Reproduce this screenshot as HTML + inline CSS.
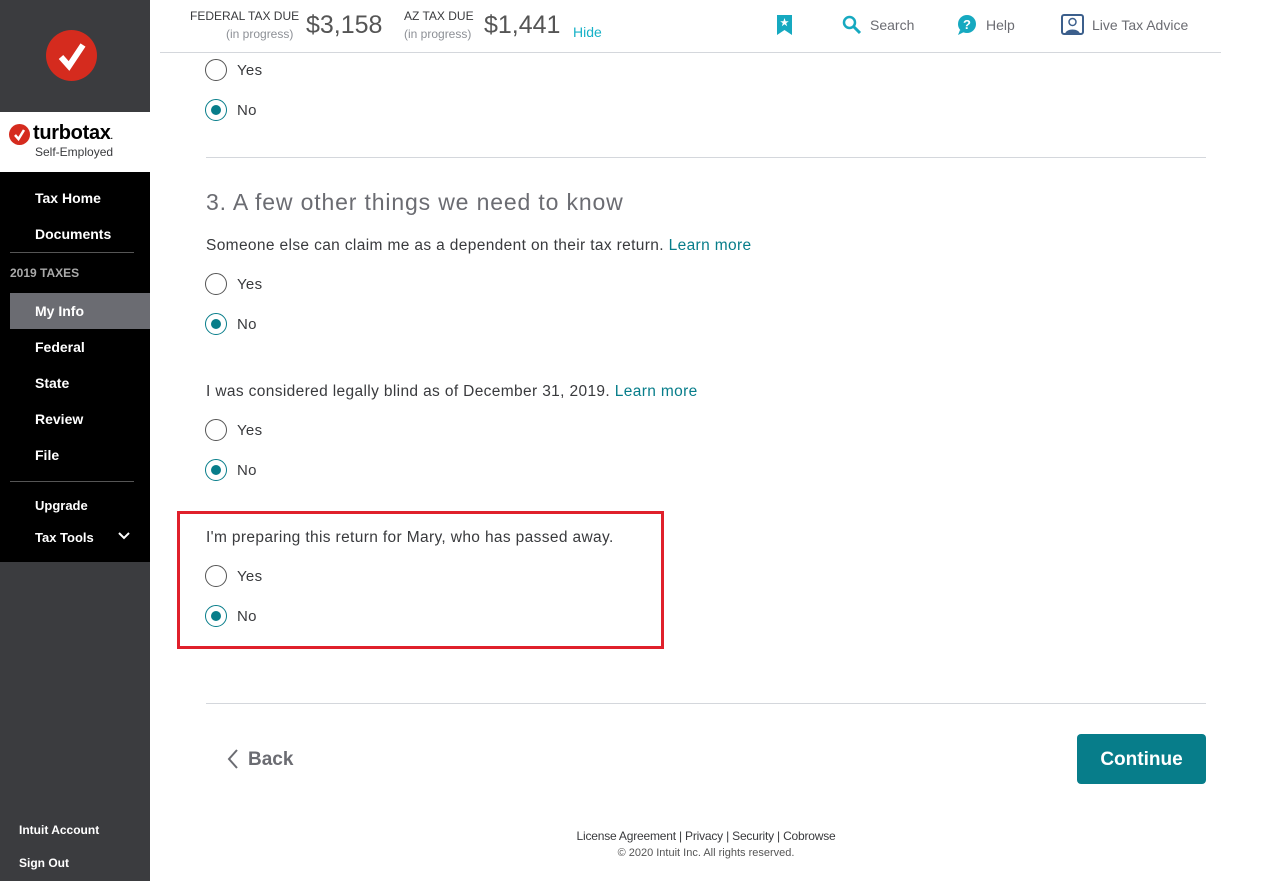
<!DOCTYPE html>
<html><head><meta charset="utf-8"><style>
*{margin:0;padding:0;box-sizing:border-box}
body{width:1262px;height:881px;position:relative;overflow:hidden;background:#fff;font-family:"Liberation Sans",sans-serif;color:#393a3d}
.abs{position:absolute}
.side{left:0;top:0;width:150px;height:881px;background:#3b3c3f}
.nav a{position:absolute;left:35px;color:#fff;font-size:14px;font-weight:bold;white-space:nowrap}
.radio{position:absolute;left:205px;width:22px;height:22px;border:1.5px solid #555;border-radius:50%}
.radio.on{border-color:#077d8a}
.radio.on:after{content:"";position:absolute;left:4.5px;top:4.5px;width:10px;height:10px;border-radius:50%;background:#077d8a}
.lbl{position:absolute;left:237px;font-size:15px;color:#393a3d;letter-spacing:0.3px}
.q{position:absolute;left:206px;font-size:15.5px;color:#393a3d;letter-spacing:0.36px;white-space:nowrap}
.q a{color:#077d8a}
.hr{position:absolute;left:206px;width:1000px;height:1px;background:#d4d7dc}
</style></head><body>
<div class="abs side">
 <div class="abs" style="left:46px;top:30px;width:51px;height:51px;border-radius:50%;background:#d52b1e"></div>
 <svg class="abs" style="left:46px;top:30px" width="51" height="51"><path d="M15 27 L23 36 L37 15" stroke="#fff" stroke-width="6" fill="none"/></svg>
 <div class="abs" style="left:0;top:112px;width:150px;height:60px;background:#fff"></div>
 <div class="abs" style="left:9px;top:124px;width:21px;height:21px;border-radius:50%;background:#d52b1e"></div>
 <svg class="abs" style="left:9px;top:124px" width="21" height="21"><path d="M6 11 L9.5 15 L15 6" stroke="#fff" stroke-width="2.5" fill="none"/></svg>
 <div class="abs" style="left:33px;top:122px;font-size:20px;font-weight:bold;color:#000;letter-spacing:-0.3px">turbotax<span style="font-size:8px">.</span></div>
 <div class="abs" style="left:35px;top:145px;font-size:12px;color:#393a3d">Self-Employed</div>
 <div class="abs nav" style="left:0;top:172px;width:150px;height:390px;background:#000">
  <a style="top:18px">Tax Home</a>
  <a style="top:54px">Documents</a>
  <div class="abs" style="left:10px;top:80px;width:124px;height:1px;background:#555"></div>
  <div class="abs" style="left:10px;top:94px;font-size:12px;font-weight:bold;color:#aaa">2019 TAXES</div>
  <div class="abs" style="left:10px;top:121px;width:140px;height:36px;background:#6b6c72"></div>
  <a style="top:131px">My Info</a>
  <a style="top:167px">Federal</a>
  <a style="top:203px">State</a>
  <a style="top:239px">Review</a>
  <a style="top:275px">File</a>
  <div class="abs" style="left:10px;top:309px;width:124px;height:1px;background:#555"></div>
  <a style="top:326px;font-size:13px">Upgrade</a>
  <a style="top:358px;font-size:13px">Tax Tools</a>
  <svg class="abs" style="left:118px;top:360px" width="12" height="8"><path d="M1 1 L6 6 L11 1" stroke="#fff" stroke-width="2" fill="none"/></svg>
 </div>
 <div class="abs" style="left:19px;top:823px;font-size:12px;color:#fff;font-weight:bold">Intuit Account</div>
 <div class="abs" style="left:19px;top:856px;font-size:12px;color:#fff;font-weight:bold">Sign Out</div>
</div>

<div class="abs" style="left:190px;top:9px;font-size:12px;color:#393a3d">FEDERAL TAX DUE</div>
<div class="abs" style="left:226px;top:27px;font-size:12px;color:#8d9096">(in progress)</div>
<div class="abs" style="left:306px;top:11px;font-size:25px;color:#555">$3,158</div>
<div class="abs" style="left:404px;top:9px;font-size:12px;color:#393a3d">AZ TAX DUE</div>
<div class="abs" style="left:404px;top:27px;font-size:12px;color:#8d9096">(in progress)</div>
<div class="abs" style="left:484px;top:11px;font-size:25px;color:#555">$1,441</div>
<div class="abs" style="left:573px;top:24px;font-size:14px;color:#16b1c7">Hide</div>
<svg class="abs" style="left:777px;top:15px" width="15" height="20"><path d="M0 0H15V20L7.5 15L0 20Z" fill="#16a9c0"/><path d="M7.5 3L8.6 6.2H11.8L9.2 8.1L10.2 11.2L7.5 9.3L4.8 11.2L5.8 8.1L3.2 6.2H6.4Z" fill="#fff"/></svg>
<svg class="abs" style="left:842px;top:15px" width="20" height="20"><circle cx="7.5" cy="7.5" r="5.5" stroke="#16a9c0" stroke-width="2.5" fill="none"/><path d="M11.5 11.5L18 18" stroke="#16a9c0" stroke-width="3"/></svg>
<div class="abs" style="left:870px;top:17px;font-size:14px;color:#6b6c72">Search</div>
<svg class="abs" style="left:957px;top:15px" width="21" height="20"><circle cx="10" cy="9" r="9" fill="#16a9c0"/><path d="M3 15L1 20L7 17Z" fill="#16a9c0"/><text x="10" y="14" font-size="13" font-weight="bold" fill="#fff" text-anchor="middle" font-family="Liberation Sans">?</text></svg>
<div class="abs" style="left:986px;top:17px;font-size:14px;color:#6b6c72">Help</div>
<svg class="abs" style="left:1061px;top:14px" width="23" height="21"><rect x="1" y="1" width="21" height="19" rx="2" fill="none" stroke="#3c5f8c" stroke-width="2"/><circle cx="11.5" cy="8" r="3.5" fill="none" stroke="#3c5f8c" stroke-width="1.5"/><path d="M4 20C5 14 18 14 19 20Z" fill="#3c5f8c"/></svg>
<div class="abs" style="left:1092px;top:17px;font-size:14px;color:#6b6c72">Live Tax Advice</div>
<div class="abs" style="left:160px;top:52px;width:1061px;height:1px;background:#d4d7dc"></div>

<div class="radio" style="top:59px"></div><div class="lbl" style="top:62px">Yes</div>
<div class="radio on" style="top:99px"></div><div class="lbl" style="top:102px">No</div>
<div class="hr" style="top:157px"></div>
<div class="abs" style="left:206px;top:189px;font-size:23px;color:#6b6c72;letter-spacing:0.85px">3. A few other things we need to know</div>
<div class="q" style="top:237px">Someone else can claim me as a dependent on their tax return. <a>Learn more</a></div>
<div class="radio" style="top:273px"></div><div class="lbl" style="top:276px">Yes</div>
<div class="radio on" style="top:313px"></div><div class="lbl" style="top:316px">No</div>
<div class="q" style="top:383px">I was considered legally blind as of December 31, 2019. <a>Learn more</a></div>
<div class="radio" style="top:419px"></div><div class="lbl" style="top:422px">Yes</div>
<div class="radio on" style="top:459px"></div><div class="lbl" style="top:462px">No</div>
<div class="abs" style="left:177px;top:511px;width:487px;height:138px;border:3px solid #e0202b"></div>
<div class="q" style="top:529px">I'm preparing this return for Mary, who has passed away.</div>
<div class="radio" style="top:565px"></div><div class="lbl" style="top:568px">Yes</div>
<div class="radio on" style="top:605px"></div><div class="lbl" style="top:608px">No</div>
<div class="hr" style="top:703px"></div>
<svg class="abs" style="left:227px;top:749px" width="12" height="20"><path d="M10 1L2 10L10 19" stroke="#6b6c72" stroke-width="2" fill="none"/></svg>
<div class="abs" style="left:248px;top:749px;font-size:19px;font-weight:bold;color:#6b6c72">Back</div>
<div class="abs" style="left:1077px;top:734px;width:129px;height:50px;background:#077d8a;border-radius:4px;color:#fff;font-size:19px;font-weight:bold;text-align:center;line-height:52px">Continue</div>
<div class="abs" style="left:0;width:1412px;top:829px;text-align:center;font-size:12px;color:#393a3d;letter-spacing:-0.2px">License Agreement | Privacy | Security | Cobrowse</div>
<div class="abs" style="left:0;width:1412px;top:847px;text-align:center;font-size:11px;color:#555">© 2020 Intuit Inc. All rights reserved.</div>
</body></html>
